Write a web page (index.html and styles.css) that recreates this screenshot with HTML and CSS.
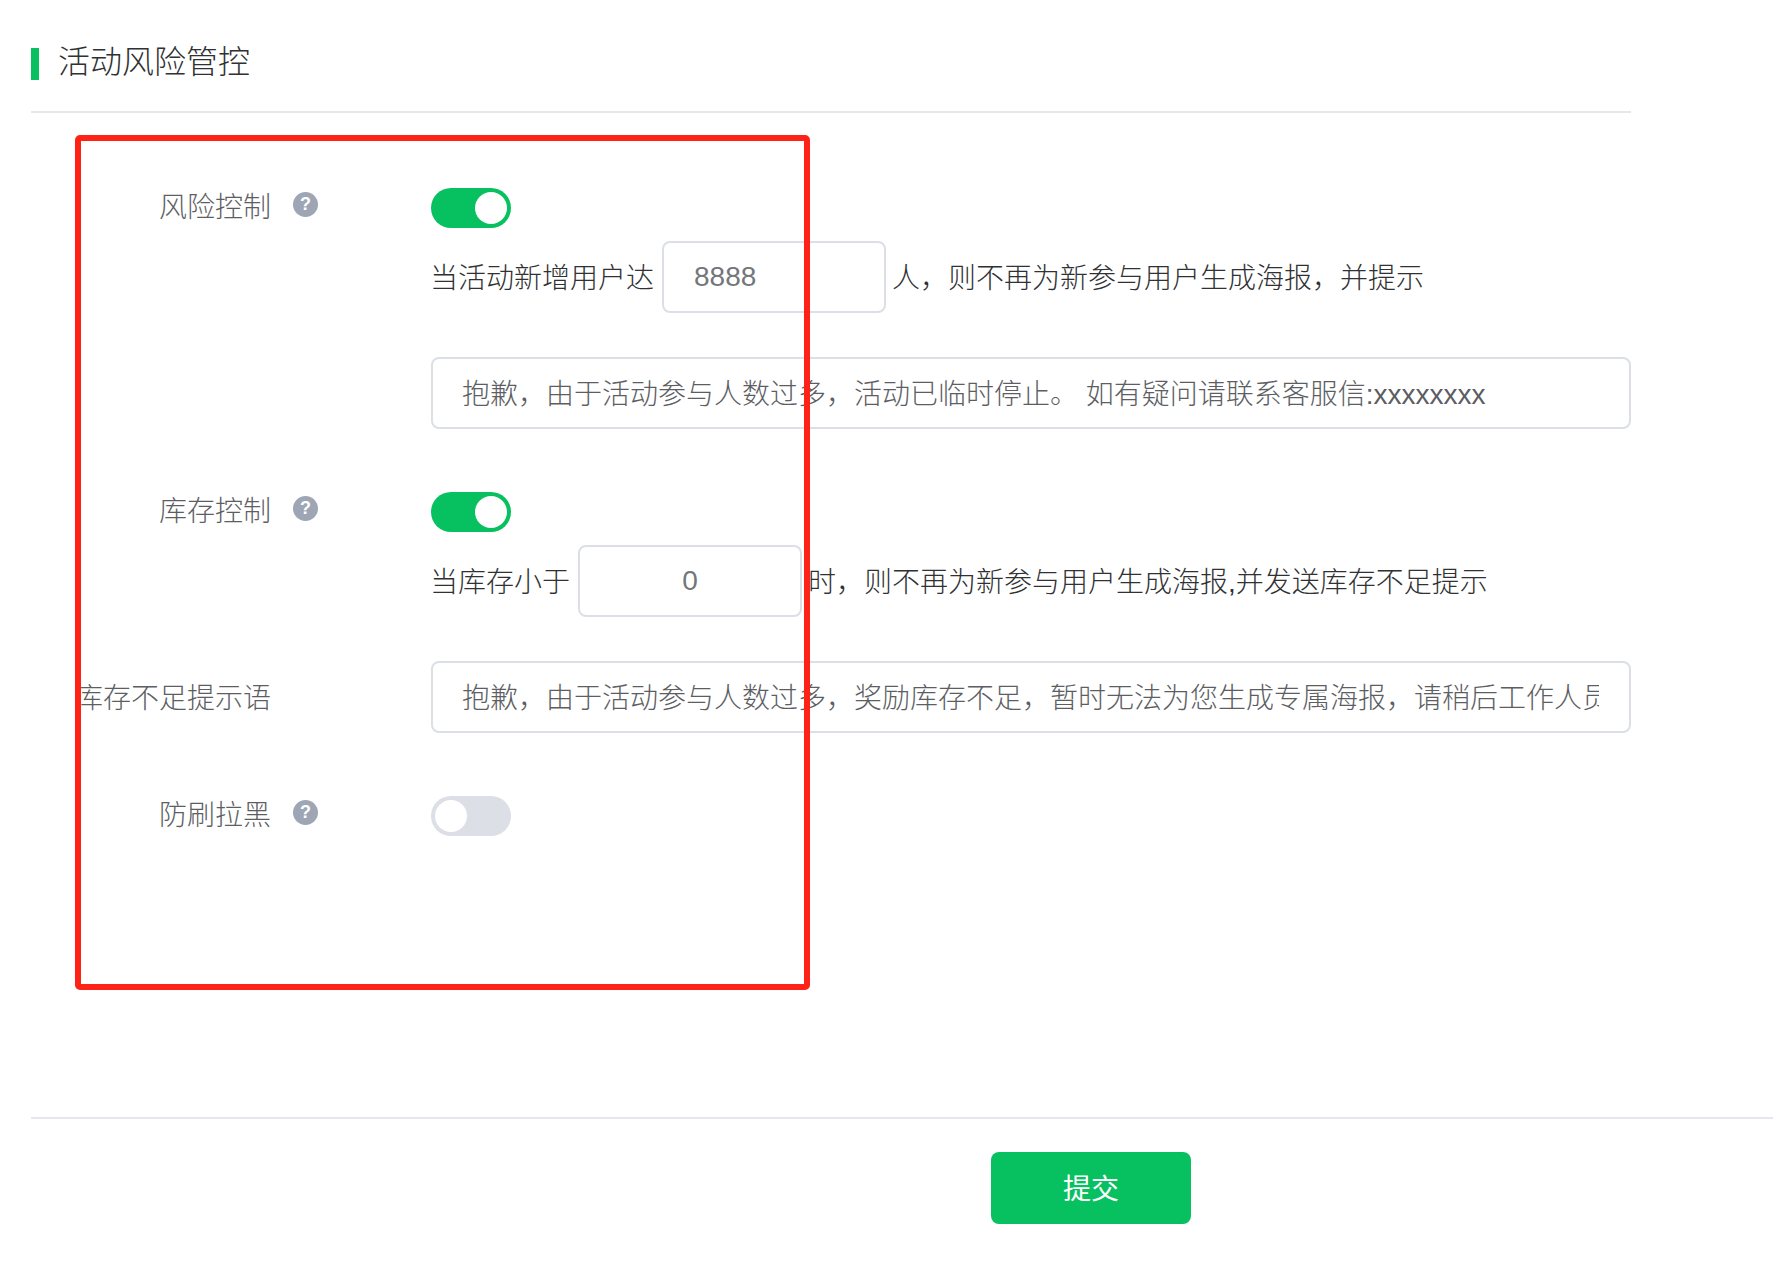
FILE: index.html
```html
<!DOCTYPE html>
<html lang="zh-CN">
<head>
<meta charset="utf-8">
<title>活动风险管控</title>
<link rel="stylesheet" href="styles.css">
</head>
<body>
<main class="page">
  <section class="panel">
    <header class="section-head">
      <span class="section-bar"></span>
      <h2 class="section-title">活动风险管控</h2>
    </header>

    <div class="form">
      <div class="field field-switch">
        <div class="field-label"><span class="label-text">风险控制</span><span class="help">?</span></div>
        <div class="field-body">
          <span class="switch switch-on"><span class="knob"></span></span>
          <div class="inline-row">
            <span class="lead">当活动新增用户达</span>
            <input class="input input-short" type="text" value="8888">
            <span class="trail">人，则不再为新参与用户生成海报，并提示</span>
          </div>
          <input class="input input-full" type="text" value="抱歉，由于活动参与人数过多，活动已临时停止。 如有疑问请联系客服信:xxxxxxxx">
        </div>
      </div>

      <div class="field field-switch">
        <div class="field-label"><span class="label-text">库存控制</span><span class="help">?</span></div>
        <div class="field-body">
          <span class="switch switch-on"><span class="knob"></span></span>
          <div class="inline-row">
            <span class="lead">当库存小于</span>
            <input class="input input-short input-center" type="text" value="0">
            <span class="trail">时，则不再为新参与用户生成海报,并发送库存不足提示</span>
          </div>
        </div>
      </div>

      <div class="field field-middle">
        <div class="field-label"><span class="label-text label-wide">库存不足提示语</span></div>
        <div class="field-body">
          <input class="input input-full" type="text" value="抱歉，由于活动参与人数过多，奖励库存不足，暂时无法为您生成专属海报，请稍后工作人员联系您">
        </div>
      </div>

      <div class="field field-switch">
        <div class="field-label"><span class="label-text">防刷拉黑</span><span class="help">?</span></div>
        <div class="field-body">
          <span class="switch switch-off"><span class="knob"></span></span>
        </div>
      </div>
    </div>
  </section>

  <footer class="actions">
    <button class="submit" type="button">提交</button>
  </footer>

  <div class="annotation"></div>
</main>
</body>
</html>
```

FILE: styles.css
```css
* {
  box-sizing: border-box;
}

html,
body {
  margin: 0;
  padding: 0;
  background: #fff;
}

body {
  font-family: "Liberation Sans", "Noto Sans CJK SC", sans-serif;
  font-size: 28px;
  font-weight: 300;
  color: #303133;
}

.page {
  position: relative;
  width: 1773px;
  height: 1274px;
  overflow: hidden;
  padding: 48px 0 0 31px;
}

.panel {
  width: 1600px;
}

.section-head {
  display: flex;
  align-items: flex-start;
  height: 65px;
  border-bottom: 2px solid #e6e7ec;
}

.section-bar {
  width: 8px;
  height: 32px;
  background: #07c160;
}

.section-title {
  margin: -2px 0 0 19px;
  font-size: 32px;
  font-weight: 300;
  line-height: 32px;
  color: #303133;
}

.form {
  padding-top: 12px;
  display: flex;
  flex-direction: column;
}

.field {
  display: flex;
  align-items: flex-start;
}

.field-switch {
  margin-top: 63px;
}

.field-middle {
  align-items: center;
  margin-top: 44px;
}

.field-label {
  display: flex;
  align-items: flex-start;
  width: 400px;
  flex: none;
  padding: 2px 0 0 128px;
  line-height: 36px;
  color: #5c5e63;
}

.field-middle .field-label {
  padding-top: 4px;
}

.label-text {
  white-space: nowrap;
}

.label-wide {
  margin-left: -84px;
}

.help {
  width: 25px;
  height: 25px;
  margin: 2px 0 0 22px;
  border-radius: 50%;
  background: #9ea5b4;
  color: #fff;
  font-size: 18px;
  font-weight: 700;
  line-height: 25px;
  text-align: center;
}

.field-body {
  flex: 1;
  display: flex;
  flex-direction: column;
  align-items: flex-start;
}

.switch {
  display: flex;
  width: 80px;
  height: 40px;
  padding: 4px;
  border-radius: 20px;
}

.switch-on {
  background: #07c160;
  justify-content: flex-end;
}

.switch-off {
  background: #dcdfe6;
  justify-content: flex-start;
}

.knob {
  width: 32px;
  height: 32px;
  border-radius: 50%;
  background: #fff;
}

.inline-row {
  display: flex;
  align-items: center;
  margin-top: 13px;
  white-space: nowrap;
}

.lead {
  margin: -2px 8px 0 -1px;
}

.trail {
  margin: -2px 0 0 6px;
}

.input {
  height: 72px;
  padding: 0 30px;
  border: 2px solid #dcdfe6;
  border-radius: 8px;
  background: #fff;
  font-family: inherit;
  font-size: 28px;
  font-weight: 300;
  color: #5c5e63;
  outline: none;
}

.input-short {
  width: 224px;
  color: #74767b;
}

.input-center {
  text-align: center;
}

.input-full {
  width: 100%;
  padding: 0 30px 3px 29px;
}

.inline-row + .input-full {
  margin-top: 44px;
}

.actions {
  position: absolute;
  top: 1117px;
  left: 31px;
  right: 0;
  height: 107px;
  padding: 33px 0 0 960px;
  border-top: 2px solid #e6e7ec;
}

.submit {
  display: block;
  width: 200px;
  height: 72px;
  padding: 0 0 2px;
  border: 0;
  border-radius: 8px;
  background: #07c160;
  color: #fff;
  font-family: inherit;
  font-size: 28px;
}

.annotation {
  position: absolute;
  left: 75px;
  top: 135px;
  width: 735px;
  height: 855px;
  border: 6px solid #ff2216;
  border-radius: 5px;
  pointer-events: none;
}
```
